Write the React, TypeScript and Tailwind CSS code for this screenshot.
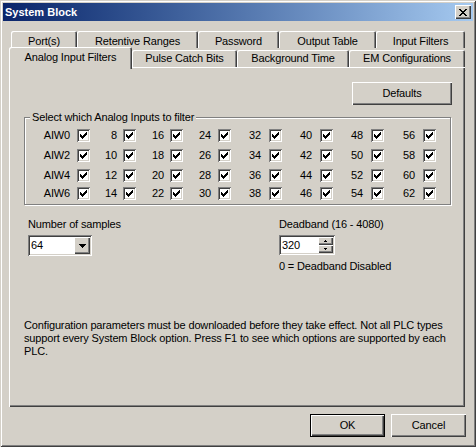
import React from "react";

const RAISED =
  "shadow-[inset_1px_1px_#fff,inset_-1px_-1px_#404040,inset_-2px_-2px_#808080]";
const SUNKEN =
  "shadow-[inset_1px_1px_#808080,inset_-1px_-1px_#fff,inset_2px_2px_#404040,inset_-2px_-2px_#d4d0c8]";
const TAB =
  "shadow-[inset_1px_1px_#fff,inset_-1px_0_#404040,inset_-2px_0_#808080] rounded-t-[2px]";

function Check() {
  return (
    <div className={"w-[13px] h-[13px] bg-white flex items-center justify-center shrink-0 " + SUNKEN}>
      <svg width="7" height="7" viewBox="0 0 7 7" shapeRendering="crispEdges">
        <path
          d="M0 2h1v3H0z M1 3h1v3H1z M2 4h1v3H2z M3 3h1v3H3z M4 2h1v3H4z M5 1h1v3H5z M6 0h1v3H6z"
          fill="#000"
        />
      </svg>
    </div>
  );
}

const colClasses = [
  "w-[65px] gap-[7px]",
  "w-[46px] gap-[6px]",
  "w-[47px] gap-[6px]",
  "w-[48px] gap-[7px]",
  "w-[51px] gap-[8px]",
  "w-[51px] gap-[8px]",
  "w-[51px] gap-[8px]",
  "w-[52px] gap-[8px]",
];

const rowClasses = ["", "mt-[7px]", "mt-[7px]", "mt-[5px]"];

export default function App() {
  const row1 = [
    { t: "Port(s)", w: "w-[66px]" },
    { t: "Retentive Ranges", w: "w-[121px]" },
    { t: "Password", w: "w-[81px]" },
    { t: "Output Table", w: "w-[97px]" },
    { t: "Input Filters", w: "w-[89px]" },
  ];
  const row2 = [
    { t: "Pulse Catch Bits", w: "w-[105px]" },
    { t: "Background Time", w: "w-[112px]" },
    { t: "EM Configurations", w: "w-[116px]" },
  ];

  return (
    <div className="w-[476px] h-[447px] bg-[#d4d0c8] p-[3px] flex flex-col font-['Liberation_Sans',Arial,sans-serif] text-[11px] leading-[13px] tracking-[-0.15px] text-black shadow-[inset_1px_1px_#d4d0c8,inset_-1px_-1px_#404040,inset_2px_2px_#fff,inset_-2px_-2px_#808080]">
      {/* Title bar */}
      <div className="h-[18px] flex items-center bg-linear-to-r from-[#0a246a] to-[#a6caf0] pl-[2px] pr-[2px]">
        <span className="flex-1 font-bold text-white text-[11px] tracking-normal">System Block</span>
        <div className={"w-[16px] h-[14px] bg-[#d4d0c8] flex items-center justify-center " + RAISED}>
          <svg width="8" height="7" viewBox="0 0 8 7" shapeRendering="crispEdges">
            <path
              d="M0 0h2v1H0z M6 0h2v1H6z M1 1h2v1H1z M5 1h2v1H5z M2 2h4v1H2z M3 3h2v1H3z M2 4h4v1H2z M1 5h2v1H1z M5 5h2v1H5z M0 6h2v1H0z M6 6h2v1H6z"
              fill="#000"
            />
          </svg>
        </div>
      </div>

      {/* Tabs row 1 */}
      <div className="mt-[10px] ml-[8px] flex h-[17px]">
        {row1.map((t) => (
          <div key={t.t} className={t.w + " h-[17px] flex justify-center pt-[4px] " + TAB}>
            {t.t}
          </div>
        ))}
      </div>

      {/* Tabs row 2 */}
      <div className="-mt-[1px] ml-[6px] flex items-start h-[20px] relative z-10">
        <div className={"w-[123px] h-[22px] bg-[#d4d0c8] flex justify-center pt-[4px] " + TAB}>
          Analog Input Filters
        </div>
        {row2.map((t) => (
          <div key={t.t} className={t.w + " mt-[3px] h-[17px] flex items-center justify-center " + TAB}>
            {t.t}
          </div>
        ))}
      </div>

      {/* Panel */}
      <div className="ml-[6px] w-[456px] h-[340px] flex flex-col shadow-[inset_1px_1px_#fff,inset_-1px_-1px_#404040,inset_-2px_-2px_#808080]">
        <div className={"mt-[15px] self-end mr-[13px] w-[100px] h-[23px] flex items-center justify-center " + RAISED}>
          Defaults
        </div>

        <fieldset className="mt-[6px] ml-[15px] w-[427px] border border-[#808080] shadow-[inset_1px_1px_#fff,1px_1px_#fff] pt-[5px] pb-[4px]">
          <legend className="ml-[5px] px-[2px] bg-[#d4d0c8] leading-[13px]">
            Select which Analog Inputs to filter
          </legend>
          {[0, 1, 2, 3].map((r) => (
            <div key={r} className={"flex h-[13px] " + rowClasses[r]}>
              {colClasses.map((cc, c) => (
                <div key={c} className={cc + " flex items-center justify-end"}>
                  <span>{c === 0 ? "AIW" + 2 * r : String(8 * c + 2 * r)}</span>
                  <Check />
                </div>
              ))}
            </div>
          ))}
        </fieldset>

        <div className="mt-[13px] ml-[19px] flex">
          <div className="w-[251px] flex flex-col">
            <span>Number of samples</span>
            <div className={"mt-[4px] w-[64px] h-[21px] bg-white flex items-center pl-[3px] pr-[2px] " + SUNKEN}>
              <span className="flex-1">64</span>
              <div className={"w-[16px] h-[17px] bg-[#d4d0c8] flex items-center justify-center " + RAISED}>
                <svg width="7" height="4" viewBox="0 0 7 4" shapeRendering="crispEdges">
                  <path d="M0 0h7v1H0z M1 1h5v1H1z M2 2h3v1H2z M3 3h1v1H3z" fill="#000" />
                </svg>
              </div>
            </div>
          </div>
          <div className="flex flex-col">
            <span>Deadband (16 - 4080)</span>
            <div className={"mt-[4px] w-[56px] h-[20px] bg-white flex items-center pl-[3px] pr-[2px] " + SUNKEN}>
              <span className="flex-1">320</span>
              <div className="w-[15px] h-[16px] flex flex-col">
                <div className={"h-[8px] bg-[#d4d0c8] flex items-center justify-center " + RAISED}>
                  <svg width="5" height="3" viewBox="0 0 5 3" shapeRendering="crispEdges">
                    <path d="M2 0h1v1H2z M1 1h3v1H1z" fill="#000" />
                  </svg>
                </div>
                <div className={"h-[8px] bg-[#d4d0c8] flex items-center justify-center " + RAISED}>
                  <svg width="5" height="3" viewBox="0 0 5 3" shapeRendering="crispEdges">
                    <path d="M1 0h3v1H1z M2 1h1v1H2z" fill="#000" />
                  </svg>
                </div>
              </div>
            </div>
            <span className="mt-[5px]">0 = Deadband Disabled</span>
          </div>
        </div>

        <div className="mt-[46px] ml-[15px] whitespace-nowrap leading-[13px]">
          <div>Configuration parameters must be downloaded before they take effect. Not all PLC types</div>
          <div>support every System Block option. Press F1 to see which options are supported by each</div>
          <div>PLC.</div>
        </div>
      </div>

      {/* Buttons */}
      <div className="mt-[7px] pr-[7px] flex justify-end gap-[6px]">
        <div className="w-[75px] h-[23px] border border-black">
          <div className={"w-full h-full flex items-center justify-center " + RAISED}>OK</div>
        </div>
        <div className={"w-[75px] h-[23px] flex items-center justify-center " + RAISED}>Cancel</div>
      </div>
    </div>
  );
}
